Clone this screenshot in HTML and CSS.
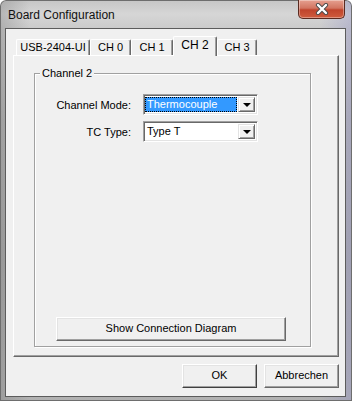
FILE: index.html
```html
<!DOCTYPE html>
<html>
<head>
<meta charset="utf-8">
<link rel="stylesheet" href="styles.css">
</head>
<body>
<div class="window">
  <div class="titlebar">
    <span class="title">Board Configuration</span>
    <div class="close">
      <svg width="14" height="12" viewBox="0 0 14 12">
        <path d="M3 2 L11 10 M11 2 L3 10" stroke="#4a4a4a" stroke-width="4.2" stroke-linecap="round"/>
        <path d="M3 2 L11 10 M11 2 L3 10" stroke="#ffffff" stroke-width="2.4" stroke-linecap="round"/>
      </svg>
    </div>
  </div>
  <div class="client">
    <div class="tabs">
      <div class="tab w74">USB-2404-UI</div>
      <div class="tab w41">CH 0</div>
      <div class="tab w42">CH 1</div>
      <div class="tab sel">CH 2</div>
      <div class="tab w40">CH 3</div>
    </div>
    <div class="panel">
      <div class="group">
        <span class="legend">Channel 2</span>
        <div class="form">
          <span class="lbl">Channel Mode:</span>
          <div class="combo">
            <div class="value"><span class="hl">Thermocouple</span></div>
            <div class="drop"><span class="arrow"></span></div>
          </div>
          <span class="lbl">TC Type:</span>
          <div class="combo">
            <div class="value"><span class="plain">Type T</span></div>
            <div class="drop"><span class="arrow"></span></div>
          </div>
        </div>
        <div class="btn diag">Show Connection Diagram</div>
      </div>
    </div>
    <div class="footer">
      <div class="btn ok">OK</div>
      <div class="btn">Abbrechen</div>
    </div>
  </div>
</div>
</body>
</html>
```
FILE: styles.css
```css
* { box-sizing: border-box; }
html, body { margin: 0; padding: 0; }
body {
  width: 352px;
  height: 401px;
  overflow: hidden;
  font-family: "Liberation Sans", Arial, sans-serif;
  font-size: 11px;
  color: #000;
}
.window {
  width: 352px;
  height: 401px;
  display: flex;
  flex-direction: column;
  border-radius: 6px 6px 0 0;
  background:
    linear-gradient(to right, rgba(120,120,120,0.35) 0px, rgba(0,0,0,0) 30px, rgba(0,0,0,0) 320px, rgba(140,140,200,0.35) 352px),
    linear-gradient(to bottom, #c6c6c6 0px, #d6d6d6 14px, #cbcbcb 28px, #b4b4b4 120px, #a9a9a9 260px, #b2b2b2 401px);
  box-shadow: inset 0 0 0 1px #6e6e6e;
}
.titlebar {
  height: 28px;
  display: flex;
  align-items: flex-start;
  padding-left: 8px;
}
.title {
  font-size: 12px;
  line-height: 12px;
  margin-top: 9px;
  color: #111;
}
.close {
  margin-left: auto;
  margin-right: 7px;
  width: 47px;
  height: 19px;
  border: 1px solid #5a2a20;
  border-top: none;
  border-radius: 0 0 5px 5px;
  background: linear-gradient(to bottom, #e6a090 0%, #d27561 45%, #c0442c 55%, #cf5c3e 100%);
  box-shadow: inset 0 0 0 1px rgba(255,255,255,0.35);
  display: flex;
  align-items: center;
  justify-content: center;
}
.close svg { display: block; }
.client {
  margin: 0 6px 4px 5px;
  flex: 1;
  border: 1px solid #5c5c5c;
  background: #f0f0f0;
  padding: 7px 6px 8px 7px;
  display: flex;
  flex-direction: column;
}
.tabs {
  display: flex;
  height: 19px;
  padding-left: 3px;
  align-items: flex-end;
}
.tab {
  height: 16px;
  border-top: 1px solid #fff;
  border-left: 1px solid #fff;
  border-right: 1px solid #696969;
  box-shadow: inset -1px 0 0 #a0a0a0;
  border-radius: 2px 2px 0 0;
  text-align: center;
  line-height: 15px;
  background: #f0f0f0;
}
.w74 { width: 74px; }
.w41 { width: 41px; }
.w42 { width: 42px; }
.w40 { width: 40px; }
.tab.sel {
  width: 44px;
  height: 20px;
  margin-bottom: -1px;
  position: relative;
  z-index: 2;
  line-height: 16px;
  font-size: 12px;
}
.panel {
  height: 302px;
  border: 1px solid;
  border-color: #fff #696969 #696969 #fff;
  box-shadow: inset -1px -1px 0 #a0a0a0;
  display: flex;
  flex-direction: column;
}
.group {
  position: relative;
  margin: 17px 27px 9px 20px;
  flex: 1;
  border: 1px solid #a0a0a0;
  box-shadow: 1px 1px 0 #fff, inset 1px 1px 0 #fff;
  display: flex;
  flex-direction: column;
  padding-top: 20px;
}
.legend {
  position: absolute;
  top: -7px;
  left: 5px;
  padding: 0 2px;
  background: #f0f0f0;
  line-height: 13px;
}
.form {
  display: grid;
  grid-template-columns: 96px 115px;
  column-gap: 12px;
  row-gap: 6px;
  grid-auto-rows: 21px;
  align-items: center;
}
.lbl {
  text-align: right;
}
.combo {
  height: 21px;
  display: flex;
  border: 1px solid;
  border-color: #a0a0a0 #fff #fff #a0a0a0;
  box-shadow: inset 1px 1px 0 #696969, inset -1px -1px 0 #e3e3e3;
  background: #fff;
  padding: 2px 2px 2px 2px;
  padding-left: 1px;
}
.combo .value {
  flex: 1;
  display: flex;
  align-items: stretch;
  padding-right: 1px;
}
.hl {
  flex: 1;
  background: #3399ff;
  color: #fff;
  outline: 1px dotted #000;
  outline-offset: -1px;
  padding-left: 2px;
  line-height: 15px;
}
.plain {
  padding-left: 2px;
  line-height: 15px;
}
.drop {
  width: 17px;
  border: 1px solid;
  border-color: #e3e3e3 #696969 #696969 #e3e3e3;
  box-shadow: inset 1px 1px 0 #fff, inset -1px -1px 0 #a0a0a0;
  background: #f0f0f0;
  display: flex;
  align-items: center;
  justify-content: center;
}
.arrow {
  width: 0;
  height: 0;
  border-left: 4px solid transparent;
  border-right: 4px solid transparent;
  border-top: 4px solid #000;
  margin-top: 1px;
}
.btn {
  height: 24px;
  width: 75px;
  border: 1px solid;
  border-color: #fff #696969 #696969 #fff;
  box-shadow: inset -1px -1px 0 #a0a0a0, inset 1px 1px 0 #e3e3e3;
  background: #f0f0f0;
  text-align: center;
  line-height: 21px;
}
.diag {
  margin-top: auto;
  margin-bottom: 5px;
  margin-left: 21px;
  width: 230px;
}
.footer {
  margin-top: 7px;
  display: flex;
  justify-content: flex-end;
  gap: 7px;
}
.ok {
  border-color: #fff #404040 #404040 #fff;
}
```
